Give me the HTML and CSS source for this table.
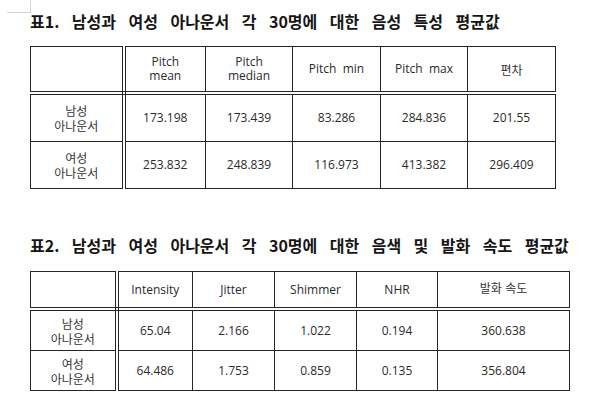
FILE: index.html
```html
<!DOCTYPE html>
<html lang="ko">
<head>
<meta charset="utf-8">
<link rel="stylesheet" href="styles.css">
</head>
<body>
<div class="page">
  <div class="corner"></div>
  <h2 class="title t1">표1. 남성과 여성 아나운서 각 30명에 대한 음성 특성 평균값</h2>
  <table class="grid g1">
    <colgroup>
      <col style="width:93px"><col style="width:82px"><col style="width:87px"><col style="width:88px"><col style="width:87px"><col style="width:88px">
    </colgroup>
    <tr class="head">
      <td class="lab"></td>
      <td>Pitch<br>mean</td>
      <td>Pitch<br>median</td>
      <td>Pitch&nbsp; min</td>
      <td>Pitch&nbsp; max</td>
      <td class="ko">편차</td>
    </tr>
    <tr class="row">
      <td class="lab ko">남성<br>아나운서</td>
      <td>173.198</td>
      <td>173.439</td>
      <td>83.286</td>
      <td>284.836</td>
      <td>201.55</td>
    </tr>
    <tr class="row">
      <td class="lab ko">여성<br>아나운서</td>
      <td>253.832</td>
      <td>248.839</td>
      <td>116.973</td>
      <td>413.382</td>
      <td>296.409</td>
    </tr>
  </table>

  <h2 class="title t2">표2. 남성과 여성 아나운서 각 30명에 대한 음색 및 발화 속도 평균값</h2>
  <table class="grid g2">
    <colgroup>
      <col style="width:86px"><col style="width:76px"><col style="width:82px"><col style="width:82px"><col style="width:81px"><col style="width:132px">
    </colgroup>
    <tr class="head">
      <td class="lab"></td>
      <td>Intensity</td>
      <td>Jitter</td>
      <td>Shimmer</td>
      <td>NHR</td>
      <td class="ko up">발화 속도</td>
    </tr>
    <tr class="row">
      <td class="lab ko">남성<br>아나운서</td>
      <td>65.04</td>
      <td>2.166</td>
      <td>1.022</td>
      <td>0.194</td>
      <td>360.638</td>
    </tr>
    <tr class="row">
      <td class="lab ko">여성<br>아나운서</td>
      <td>64.486</td>
      <td>1.753</td>
      <td>0.859</td>
      <td>0.135</td>
      <td>356.804</td>
    </tr>
  </table>
</div>
</body>
</html>
```
FILE: styles.css
```css
html, body {
  margin: 0;
  padding: 0;
  background: #ffffff;
}
.page {
  padding-left: 30px;
  color: #2a2a2a;
  font-family: "Open Sans", "Noto Sans CJK KR", sans-serif;
}
.corner {
  width: 23px;
  height: 12px;
  margin-left: -23px;
  border-right: 1px solid #d4d4d4;
  border-bottom: 1px solid #d4d4d4;
}
.title {
  margin: 0;
  font-family: "Noto Sans CJK KR", sans-serif;
  font-weight: 700;
  font-size: 16px;
  line-height: 17px;
  height: 17px;
  color: #151515;
  word-spacing: 8px;
  white-space: nowrap;
}
.t1 { margin-top: 0; }
.t2 { margin-top: 48px; }
.grid {
  border-collapse: collapse;
  table-layout: fixed;
  margin-top: 16px;
  font-size: 12px;
  line-height: 14px;
}
.g1 { width: 526px; }
.g2 { width: 539px; margin-top: 17px; }
.grid td {
  border: 1px solid #262626;
  padding: 0;
  text-align: center;
  vertical-align: middle;
}
.grid td.lab {
  border-right: 4px double #262626;
}
.grid tr.head td {
  border-bottom: 4px double #262626;
}
.ko {
  font-family: "Noto Sans CJK KR", sans-serif;
  font-size: 12px;
  line-height: 15px;
  color: #333;
}
.g1 .head td { height: 44px; }
.g1 .row td { height: 46px; }
.g2 .head td { height: 31px; }
.g2 .row td { height: 39px; }
.up { padding-bottom: 4px !important; }
```
